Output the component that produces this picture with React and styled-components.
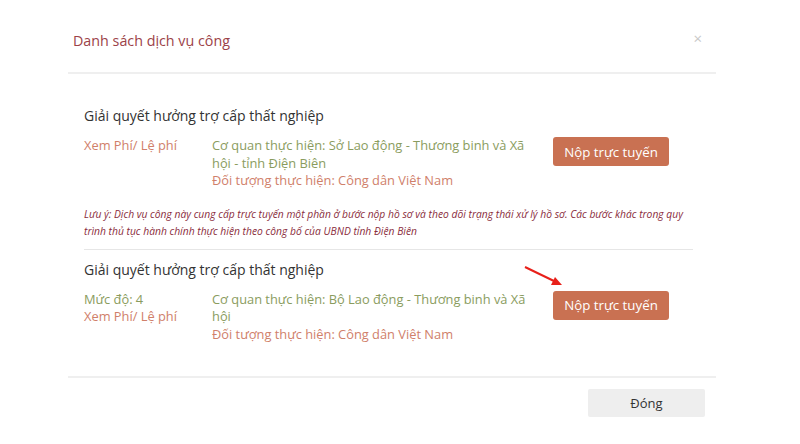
import React from "react";
import styled, { createGlobalStyle } from "styled-components";

const Global = createGlobalStyle`
  html, body { margin: 0; padding: 0; background: #ffffff; }
  body { font-family: "Open Sans", "Liberation Sans", sans-serif; }
  * { box-sizing: border-box; }
`;

const Page = styled.div`
  width: 800px;
  height: 444px;
  background: #fff;
  overflow: hidden;
`;

const Modal = styled.div`
  margin-left: 68px;
  width: 648px;
  display: flex;
  flex-direction: column;
`;

const Header = styled.div`
  height: 74px;
  padding: 8px 14px 0 5px;
  display: flex;
  align-items: center;
  justify-content: space-between;
  border-bottom: 2px solid #efefef;
`;

const Title = styled.h4`
  margin: 0;
  font-size: 14.3px;
  font-weight: 400;
  color: #9c4248;
`;

const Close = styled.span`
  font-size: 15px;
  color: #c8c8c8;
  line-height: 1;
  margin-top: -4px;
`;

const Body = styled.div`
  padding: 32px 23px 0 16px;
`;

const Section = styled.div`
  padding-bottom: ${(p) => p.$pb}px;
  border-bottom: ${(p) => (p.$divider ? "1px solid #e6e6e6" : "none")};
  margin-bottom: ${(p) => p.$mb}px;
`;

const ServiceTitle = styled.div`
  font-size: 14px;
  line-height: 20px;
  color: #333;
  margin-bottom: 11px;
`;

const Row = styled.div`
  display: flex;
  align-items: flex-start;
  font-size: 12.85px;
  line-height: 17.5px;
`;

const Col1 = styled.div`
  width: 128px;
  flex-shrink: 0;
  display: flex;
  flex-direction: column;
`;

const Col2 = styled.div`
  width: 322px;
  flex-shrink: 0;
  display: flex;
  flex-direction: column;
`;

const Text = styled.span`
  color: ${(p) => (p.$tone === "green" ? "#8a9c5e" : "#d0806a")};
`;

const ActionWrap = styled.div`
  position: relative;
  margin-left: 19px;
  padding-top: ${(p) => p.$pt}px;
`;

const PrimaryButton = styled.button`
  width: 116px;
  height: 29px;
  border: none;
  border-radius: 3px;
  background: #c97152;
  color: #fff;
  font-family: inherit;
  font-size: 13.3px;
  cursor: pointer;
`;

const Arrow = styled.svg`
  position: absolute;
  left: -30px;
  top: -26px;
`;

const Note = styled.p`
  margin: 16px 0 0;
  font-size: 10.3px;
  line-height: 17px;
  font-style: italic;
  color: #8a2c3c;
`;

const Footer = styled.div`
  margin-top: 33px;
  border-top: 2px solid #efefef;
  padding: 11px 11px 0 0;
  display: flex;
  justify-content: flex-end;
`;

const CloseButton = styled.button`
  width: 117px;
  height: 28px;
  border: none;
  border-radius: 2px;
  background: #eeeeee;
  color: #333;
  font-family: inherit;
  font-size: 13px;
  cursor: pointer;
`;

export default function App() {
  return (
    <Page>
      <Global />
      <Modal>
        <Header>
          <Title>Danh sách dịch vụ công</Title>
          <Close>×</Close>
        </Header>
        <Body>
          <Section $divider $pb={9} $mb={10}>
            <ServiceTitle>Giải quyết hưởng trợ cấp thất nghiệp</ServiceTitle>
            <Row>
              <Col1>
                <Text>Xem Phí/ Lệ phí</Text>
              </Col1>
              <Col2>
                <Text $tone="green">
                  Cơ quan thực hiện: Sở Lao động - Thương binh và Xã hội - tỉnh Điện Biên
                </Text>
                <Text>Đối tượng thực hiện: Công dân Việt Nam</Text>
              </Col2>
              <ActionWrap $pt={0}>
                <PrimaryButton>Nộp trực tuyến</PrimaryButton>
              </ActionWrap>
            </Row>
            <Note>
              Lưu ý: Dịch vụ công này cung cấp trực tuyến một phần ở bước nộp hồ sơ và theo dõi trạng thái xử lý hồ sơ. Các bước khác trong quy trình thủ tục hành chính thực hiện theo công bố của UBND tỉnh Điện Biên
            </Note>
          </Section>
          <Section $pb={0} $mb={0}>
            <ServiceTitle>Giải quyết hưởng trợ cấp thất nghiệp</ServiceTitle>
            <Row>
              <Col1>
                <Text $tone="green">Mức độ: 4</Text>
                <Text>Xem Phí/ Lệ phí</Text>
              </Col1>
              <Col2>
                <Text $tone="green">
                  Cơ quan thực hiện: Bộ Lao động - Thương binh và Xã hội
                </Text>
                <Text>Đối tượng thực hiện: Công dân Việt Nam</Text>
              </Col2>
              <ActionWrap $pt={0}>
                <Arrow width="40" height="22" viewBox="0 0 40 22">
                  <line x1="2" y1="2" x2="33" y2="17" stroke="#e8201a" strokeWidth="2" />
                  <polygon points="39,20 28,20 32,12" fill="#e8201a" />
                </Arrow>
                <PrimaryButton>Nộp trực tuyến</PrimaryButton>
              </ActionWrap>
            </Row>
          </Section>
        </Body>
        <Footer>
          <CloseButton>Đóng</CloseButton>
        </Footer>
      </Modal>
    </Page>
  );
}
